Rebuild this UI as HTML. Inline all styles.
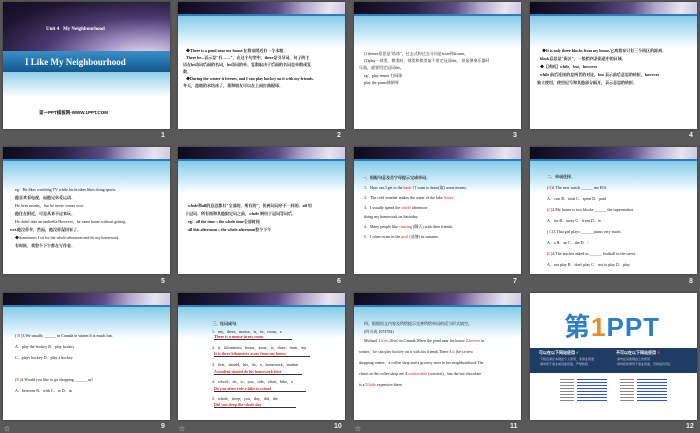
<!DOCTYPE html>
<html><head><meta charset="utf-8">
<style>
*{margin:0;padding:0;box-sizing:border-box}
body{width:700px;height:433px;background:#595959;position:relative;overflow:hidden;font-family:"Liberation Serif","Noto Serif CJK SC",serif}
.s{position:absolute;width:167px;height:127px;background:#fff;overflow:hidden;box-shadow:0 0 2px #333}
.hd{position:absolute;left:0;top:0;width:100%;height:12px;background:linear-gradient(100deg,#0e0a1a 0%,#2a1f45 35%,#5e4a85 60%,#b4a6cc 75%,#e9e4f0 90%,#cfc7df 100%)}
.ln{position:absolute;left:0;top:12px;width:100%;height:1.5px;background:#2b7fb6}
.gr{position:absolute;left:0;top:13.5px;width:100%;height:32px;background:linear-gradient(#84cbe8,#cdebf7 60%,#fff)}
.t{position:absolute;font-size:4px;line-height:5px;color:#111;white-space:nowrap}
.b{font-weight:bold}
.r{color:#e02020}
.n{position:absolute;color:#eee;font:bold 7px "Liberation Sans",sans-serif}
.st{position:absolute;color:#ccc;font-size:6px}
</style></head><body>

<!-- slide 1 -->
<div class="s" style="left:3px;top:2px">
 <div style="position:absolute;left:0;top:0;width:100%;height:49px;background:radial-gradient(ellipse at 85% 110%,#e8e2f2 0%,#9d8bbd 25%,#4c3a70 50%,#1d1530 80%,#120c20 100%)"></div>
 <div class="t b" style="left:43px;top:25px;color:#fff;font-size:5px">Unit 4 &nbsp; My Neighbourhood</div>
 <div style="position:absolute;left:0;top:49px;width:100%;height:21px;background:linear-gradient(#3b8fc6,#1f6ea8 60%,#15578a)"></div>
 <div class="t b" style="left:22px;top:56px;color:#fff;font-size:9px;line-height:9px">I Like My Neighbourhood</div>
 <div style="position:absolute;left:0;top:70px;width:100%;height:25px;background:linear-gradient(#8fd0ea,#fff)"></div>
 <div class="t b" style="left:36px;top:108px;font-family:'Liberation Sans','Noto Sans CJK SC',sans-serif;font-size:4.5px">第一PPT模板网-WWW.1PPT.COM</div>
</div>
<div class="n" style="left:161px;top:132px">1</div>

<!-- slide 2 -->
<div class="s" style="left:178px;top:2px">
 <div class="hd"></div><div class="ln"></div><div class="gr"></div>
 <div class="t b" style="left:8px;top:46px">◆There is a pond near my house.在我家附近有一个水塘。</div>
 <div class="t b" style="left:8px;top:53px">There be...表示是"有……"，在这个句型中，there是引导词，句子的主</div>
 <div class="t b" style="left:5px;top:60px">语在be动词后面的名词，be动词的单、复数取决于后面的名词是单数或复</div>
 <div class="t b" style="left:5px;top:67px">数。</div>
 <div class="t b" style="left:8px;top:74px">◆During the winter it freezes, and I can play hockey on it with my friends.</div>
 <div class="t b" style="left:5px;top:81px">冬天，池塘的水结冰了，我和朋友可以在上面打曲棍球。</div>
</div>
<div class="n" style="left:337px;top:132px">2</div>

<!-- slide 3 -->
<div class="s" style="left:354px;top:2px">
 <div class="hd"></div><div class="ln"></div><div class="gr"></div>
 <div class="t" style="left:10px;top:49px">(1)freeze意思是"结冰"，过去式和过去分词是froze和frozen。</div>
 <div class="t" style="left:10px;top:56px">(2)play一球类，棋类时，球类和棋类前不用定冠词the。 但是弹奏乐器时</div>
 <div class="t" style="left:5px;top:63px">乐器，就要用定冠词the。</div>
 <div class="t" style="left:10px;top:71px">eg：play tennis 打网球</div>
 <div class="t" style="left:10px;top:78px">play the piano弹钢琴</div>
</div>
<div class="n" style="left:513px;top:132px">3</div>

<!-- slide 4 -->
<div class="s" style="left:530px;top:2px">
 <div class="hd"></div><div class="ln"></div><div class="gr"></div>
 <div class="t b" style="left:12px;top:46px">◆It is only three blocks from my house.它离我家只有三个街区的距离。</div>
 <div class="t b" style="left:10px;top:54px">block意思是"街区"，一般指四条街道中的区域。</div>
 <div class="t b" style="left:10px;top:62px">◆【辨析】while，but，however</div>
 <div class="t b" style="left:10px;top:70px">while 前后连接的是两者的对比，but 表示前后意思的转折，however</div>
 <div class="t b" style="left:7px;top:78px">独立使用，使用逗号和其他部分隔开，表示意思的转折。</div>
</div>
<div class="n" style="left:689px;top:132px">4</div>

<!-- slide 5 -->
<div class="s" style="left:3px;top:147px">
 <div class="hd"></div><div class="ln"></div><div class="gr"></div>
 <div class="t" style="left:12px;top:40px">eg：He likes watching TV while his brother likes doing sports.</div>
 <div class="t b" style="left:12px;top:48px">他喜欢看电视，而他兄弟爱运动。</div>
 <div class="t" style="left:12px;top:56px">He lives nearby，but he never comes over.</div>
 <div class="t b" style="left:12px;top:64px">他住在附近，可是从来不过来玩。</div>
 <div class="t" style="left:12px;top:72px">He didn't take an umbrella.However，he came home without getting</div>
 <div class="t b" style="left:7px;top:80px">wet.他没带伞，然而，他没带湿回家了。</div>
 <div class="t" style="left:12px;top:88px">◆Sometimes I sit for the whole afternoon and do my homework.</div>
 <div class="t b" style="left:12px;top:96px">有时候，我整个下午都在写作业。</div>
</div>
<div class="n" style="left:161px;top:278px">5</div>

<!-- slide 6 -->
<div class="s" style="left:178px;top:147px">
 <div class="hd"></div><div class="ln"></div><div class="gr"></div>
 <div class="t b" style="left:10px;top:56px">whole和all的意思都有"全部的，所有的"，但两词词序不一样的。all 用</div>
 <div class="t b" style="left:7px;top:64px">于冠词、所有格和其他限定词之前，whole 则用于冠词等词后。</div>
 <div class="t b" style="left:10px;top:72px">eg：all the time＝the whole time全部时间</div>
 <div class="t b" style="left:10px;top:80px">all this afternoon＝the whole afternoon整个下午</div>
</div>
<div class="n" style="left:337px;top:278px">6</div>

<!-- slide 7 -->
<div class="s" style="left:354px;top:147px">
 <div class="hd"></div><div class="ln"></div><div class="gr"></div>
 <div class="t b" style="left:8px;top:28px">一、根据句意及首字母提示完成单词。</div>
 <div class="t" style="left:10px;top:38px">1．How can I get to the <span class="r">bank</span> ? I want to draw(取) some money.</div>
 <div class="t" style="left:10px;top:48px">2．The cold weather makes the water of the lake <span class="r">freeze</span> .</div>
 <div class="t" style="left:10px;top:58px">3．I usually spend the <span class="r">whole</span> afternoon</div>
 <div class="t" style="left:10px;top:67px">doing my homework on Saturday.</div>
 <div class="t" style="left:10px;top:77px">4．Many people like <span class="r">chatting</span> (聊天) with their friends.</div>
 <div class="t" style="left:10px;top:87px">5．I often swim in the <span class="r">pool</span> (池塘) in summer.</div>
</div>
<div class="n" style="left:513px;top:278px">7</div>

<!-- slide 8 -->
<div class="s" style="left:530px;top:147px">
 <div class="hd"></div><div class="ln"></div><div class="gr"></div>
 <div class="t b" style="left:17px;top:27px">二、单项选择。</div>
 <div class="t" style="left:17px;top:38px">(<span class="r">A</span>)1.The new watch ______ me ¥10.</div>
 <div class="t" style="left:17px;top:49px">A．cost B．took C．spent D．paid</div>
 <div class="t" style="left:17px;top:60px">(<span class="r">C</span>)2.My house is two blocks ______ the supermarket.</div>
 <div class="t" style="left:17px;top:71px">A．far B．away C．from D．to</div>
 <div class="t" style="left:17px;top:82px">( <span class="r">C</span>)3.That girl plays ______ piano very much.</div>
 <div class="t" style="left:17px;top:93px">A．a B．an C．the D．/</div>
 <div class="t" style="left:17px;top:104px">(<span class="r">C</span>)4.The teacher asked us ______ football in the street.</div>
 <div class="t" style="left:17px;top:115px">A．not play B．don't play C．not to play D．play</div>
</div>
<div class="n" style="left:689px;top:278px">8</div>

<!-- slide 9 -->
<div class="s" style="left:3px;top:293px">
 <div class="hd"></div><div class="ln"></div><div class="gr"></div>
 <div class="t" style="left:12px;top:40px">( <span class="r">B</span> )3.We usually ______ in Canada in winter.It is much fun.</div>
 <div class="t" style="left:12px;top:51px">A．play the hockey B．play hockey</div>
 <div class="t" style="left:12px;top:62px">C．plays hockey D．play a hockey</div>
 <div class="t" style="left:12px;top:84px">(<span class="r">B</span> )4.Would you like to go shopping ______ us?</div>
 <div class="t" style="left:12px;top:95px">A．between B．with C．to D．in</div>
</div>
<div class="n" style="left:161px;top:423px">9</div>
<div class="st" style="left:4px;top:424px">☆</div>

<!-- slide 10 -->
<div class="s" style="left:178px;top:293px">
 <div class="hd"></div><div class="ln"></div><div class="gr"></div>
 <div class="t b" style="left:34px;top:28px">三、连词成句。</div>
 <div class="t" style="left:34px;top:36px">1．my，there，mouse，is，in，room，a</div>
 <div class="t r b" style="left:36px;top:41px;border-bottom:0.6px solid #333;width:78px">There is a mouse in my room</div>
 <div class="t" style="left:34px;top:52px">2．it，kilometers，house，away，is，three，from，my</div>
 <div class="t r b" style="left:36px;top:58px;border-bottom:0.6px solid #333;width:96px">It is three kilometers away from my house</div>
 <div class="t" style="left:34px;top:69px">3．first，should，his，do，a，homework，student</div>
 <div class="t r b" style="left:36px;top:76px;border-bottom:0.6px solid #333;width:88px">A student should do his homework first</div>
 <div class="t" style="left:34px;top:86px">4．school，do，to，you，ride，often，bike，a</div>
 <div class="t r b" style="left:36px;top:93px;border-bottom:0.6px solid #333;width:92px">Do you often ride a bike to school</div>
 <div class="t" style="left:34px;top:103px">5．whole，sleep，you，day，did，the</div>
 <div class="t r b" style="left:36px;top:109px;border-bottom:0.6px solid #333;width:82px">Did you sleep the whole day</div>
</div>
<div class="n" style="left:334px;top:423px">10</div>
<div class="st" style="left:179px;top:424px">☆</div>

<!-- slide 11 -->
<div class="s" style="left:354px;top:293px">
 <div class="hd"></div><div class="ln"></div><div class="gr"></div>
 <div class="t" style="left:10px;top:28px">四、根据短文内容及所给提示完善所给单词的适当形式填空。</div>
 <div class="t" style="left:10px;top:36px">(四川成 1074784)</div>
 <div class="t" style="left:10px;top:45px">Michael 1.<span class="r">lives</span> (live) in Canada.When the pond near his house 2.<span class="r">freezes</span> in</div>
 <div class="t" style="left:5px;top:56px">winter，he can play hockey on it with his friends.There 3.<span class="r">is</span> (be) a new</div>
 <div class="t" style="left:5px;top:67px">shopping centre，a coffee shop and a grocery store in his neighbourhood.The</div>
 <div class="t" style="left:5px;top:78px">chairs in the coffee shop are 4.<span class="r">comfortable</span> (comfort)，but the hot chocolate</div>
 <div class="t" style="left:5px;top:89px">is a 5.<span class="r">little</span> expensive there.</div>
</div>
<div class="n" style="left:510px;top:423px">11</div>
<div class="st" style="left:355px;top:424px">☆</div>

<!-- slide 12 -->
<div class="s" style="left:530px;top:293px">
 <div style="position:absolute;left:34px;top:14px;font:bold 26px 'Liberation Sans','Noto Sans CJK SC',sans-serif;color:#2a7fc8;letter-spacing:1px">第<span style="color:#f08a1c">1</span>PPT</div>
 <div style="position:absolute;left:0;top:55px;width:100%;height:25px;background:#1f3c64"></div>
 <div class="t b" style="left:9px;top:58px;color:#fff;font-family:'Noto Sans CJK SC',sans-serif">可以在以下网站使用 <span style="color:#5c5">✔</span></div>
 <div class="t" style="left:9px;top:64px;color:#dde;font-size:3px">·下载后请在本网站个人使用，非商业用途</div>
 <div class="t" style="left:9px;top:69px;color:#dde;font-size:3px">·请勿用于商业或其他用途，严禁转载</div>
 <div class="t b" style="left:86px;top:58px;color:#fff;font-family:'Noto Sans CJK SC',sans-serif">不可以在以下网站使用 <span style="color:#e33">✖</span></div>
 <div class="t" style="left:86px;top:64px;color:#dde;font-size:3px">·请勿在其他网站上传使用</div>
 <div class="t" style="left:86px;top:69px;color:#dde;font-size:3px">·请勿将资源用于商业用途，否则追究责任</div>
 <div style="position:absolute;left:30px;top:86px;width:14px;height:24px;background:repeating-linear-gradient(#888 0 1px,#fff 1px 3px)"></div>
 <div style="position:absolute;left:47px;top:86px;width:30px;height:24px;background:repeating-linear-gradient(#3050e0 0 1px,#fff 1px 3px)"></div>
 <div style="position:absolute;left:90px;top:86px;width:14px;height:24px;background:repeating-linear-gradient(#888 0 1px,#fff 1px 3px)"></div>
 <div style="position:absolute;left:107px;top:86px;width:30px;height:24px;background:repeating-linear-gradient(#3050e0 0 1px,#fff 1px 3px)"></div>
</div>
<div class="n" style="left:686px;top:423px">12</div>

</body></html>
